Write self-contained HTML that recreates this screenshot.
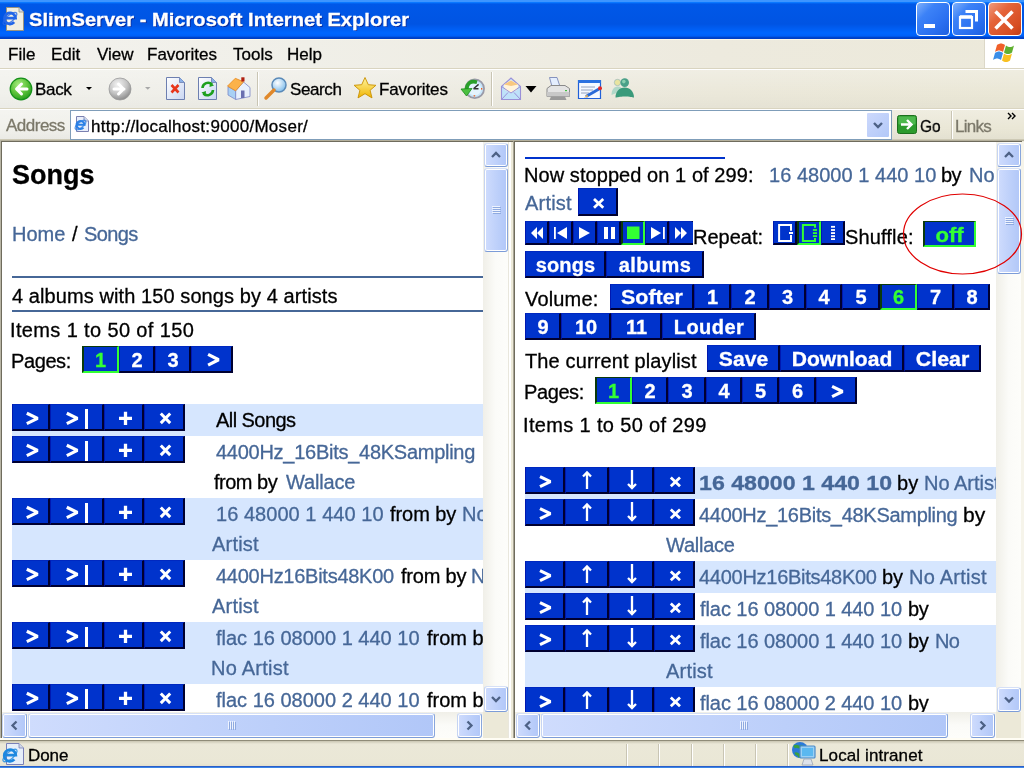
<!DOCTYPE html>
<html><head><meta charset="utf-8"><title>SlimServer - Microsoft Internet Explorer</title>
<style>
html,body{margin:0;padding:0;width:1024px;height:768px;overflow:hidden;background:#ece9d8;}
body{position:relative;font-family:"Liberation Sans", sans-serif;}
.a{position:absolute;}
.t{position:absolute;white-space:pre;will-change:transform;-webkit-text-stroke:0.3px currentColor;}
</style></head><body>
<div class="a" style="left:0px;top:0px;width:1024px;height:39px;background:linear-gradient(#3d95ff 0px,#3d95ff 1.5px,#0a78ff 2.5px,#0058e8 4px,#0054e3 24px,#005cf0 28px,#0066ff 33px,#0060f8 36px,#0044cc 37.5px,#003cc0 39px);"></div>
<div class="t" id="t0" style="left:28.64px;top:10px;font-size:19px;line-height:19px;font-weight:700;color:#fff;transform:scaleX(1.0587);transform-origin:0 50%;text-shadow:1px 1px 0 #0a2a9a;">SlimServer - Microsoft Internet Explorer</div>
<svg class="a" style="left:0;top:0;overflow:visible" width="1" height="1"><path d="M6.5 7.5H19L23.5 12V30.5H6.5z" fill="#f0eee2" stroke="#9a9480" stroke-width="1"/><path d="M19 7.5V12H23.5" fill="#cfd8ea" stroke="#9a9480" stroke-width="0.8"/><path d="M4.4 18.2H15.600000000000001A5.6 5.6 0 1 0 14.2 22.195999999999998" stroke="#2266e8" stroke-width="2.72" fill="none"/><ellipse cx="10" cy="18.5" rx="8.50" ry="3.40" transform="rotate(-40 10 18.5)" fill="none" stroke="#2266e8" stroke-width="1.3" opacity="0.8"/></svg>
<div class="a" style="left:916px;top:2px;width:34px;height:34px;background:linear-gradient(135deg,#7fb0fb 0%,#3c82f7 30%,#2a6ff0 70%,#1d5fe0 100%);border:1px solid #fff;border-radius:4px;box-sizing:border-box;"></div>
<div class="a" style="left:952px;top:2px;width:34px;height:34px;background:linear-gradient(135deg,#7fb0fb 0%,#3c82f7 30%,#2a6ff0 70%,#1d5fe0 100%);border:1px solid #fff;border-radius:4px;box-sizing:border-box;"></div>
<div class="a" style="left:988px;top:2px;width:34px;height:34px;background:linear-gradient(135deg,#f09a7c 0%,#e5643a 35%,#d64d22 80%,#c13d17 100%);border:1px solid #fff;border-radius:4px;box-sizing:border-box;"></div>
<div class="a" style="left:924px;top:24px;width:11px;height:4px;background:#fff;"></div>
<svg class="a" style="left:952px;top:2px" width="34" height="34" viewBox="0 0 34 34">
<path d="M13.5 9.5h11v10" fill="none" stroke="#fff" stroke-width="3"/>
<rect x="8" y="15" width="12" height="11" fill="none" stroke="#fff" stroke-width="2.2"/>
<path d="M8 15h12" stroke="#fff" stroke-width="3.5"/>
</svg>
<svg class="a" style="left:988px;top:2px" width="34" height="34" viewBox="0 0 34 34">
<path d="M7.5 9.5l17 17M24.5 9.5l-17 17" stroke="#fff" stroke-width="3.5"/>
</svg>
<div class="a" style="left:0px;top:39px;width:1024px;height:29px;background:linear-gradient(90deg,#f3f2ee 0%,#f0efe8 30%,#edeade 70%,#ece9da 100%);"></div>
<div class="a" style="left:0px;top:39px;width:1024px;height:1px;background:#fff8e8;"></div>
<div class="a" style="left:984px;top:39px;width:40px;height:29px;background:#fff;border-left:1px solid #dcd8c8;box-sizing:border-box;"></div>
<svg class="a" style="left:993px;top:40px" width="26" height="24" viewBox="0 0 26 24" style="transform:scale(1.1)">
<path d="M4 5c3-2 5-2 8 0l-2 7c-3-2-5-2-8 0z" fill="#f0602a"/>
<path d="M13 5.5c3 2 5 2 8 0l-2 7c-3 2-5 2-8 0z" fill="#60b030"/>
<path d="M2 13c3-2 5-2 8 0l-2 7c-3-2-5-2-8 0z" fill="#3a8ee8"/>
<path d="M11 13.5c3 2 5 2 8 0l-2 7c-3 2-5 2-8 0z" fill="#f8c020"/>
</svg>
<div class="t" id="t1" style="left:8.30px;top:46px;font-size:17px;line-height:17px;">File</div>
<div class="t" id="t2" style="left:50.50px;top:46px;font-size:17px;line-height:17px;">Edit</div>
<div class="t" id="t3" style="left:97.00px;top:46px;font-size:17px;line-height:17px;">View</div>
<div class="t" id="t4" style="left:146.70px;top:46px;font-size:17px;line-height:17px;">Favorites</div>
<div class="t" id="t5" style="left:233.40px;top:46px;font-size:17px;line-height:17px;">Tools</div>
<div class="t" id="t6" style="left:287.20px;top:46px;font-size:17px;line-height:17px;">Help</div>
<div class="a" style="left:0px;top:68px;width:1024px;height:1px;background:#d9d4c0;"></div>
<div class="a" style="left:0px;top:69px;width:1024px;height:1px;background:#fff;"></div>
<div class="a" style="left:0px;top:70px;width:1024px;height:38px;background:linear-gradient(rgba(255,255,255,0.25),rgba(255,255,255,0) 60%,rgba(0,0,0,0.025)),linear-gradient(90deg,#f1f1ec 0%,#eeede6 30%,#ebe8da 70%,#eae7d6 100%);"></div>
<div class="a" style="left:0px;top:108px;width:1024px;height:1px;background:#d9d4c0;"></div>
<div class="a" style="left:0px;top:109px;width:1024px;height:1px;background:#fff;"></div>
<svg class="a" style="left:0px;top:70px" width="640" height="38" viewBox="0 70 640 38">
<defs>
<radialGradient id="gG" cx="0.4" cy="0.3" r="0.7"><stop offset="0" stop-color="#a8ec80"/><stop offset="0.6" stop-color="#5cc23a"/><stop offset="1" stop-color="#2aa020"/></radialGradient>
<radialGradient id="gY" cx="0.4" cy="0.3" r="0.7"><stop offset="0" stop-color="#f4f4f4"/><stop offset="0.6" stop-color="#c4c4c4"/><stop offset="1" stop-color="#8e8e8e"/></radialGradient>
<linearGradient id="pg" x1="0" y1="0" x2="1" y2="1"><stop offset="0" stop-color="#ffffff"/><stop offset="1" stop-color="#c9d6f2"/></linearGradient>
<radialGradient id="mg" cx="0.4" cy="0.35" r="0.6"><stop offset="0" stop-color="#ffffff"/><stop offset="1" stop-color="#8cc4ee"/></radialGradient>
<linearGradient id="sg" x1="0" y1="0" x2="0" y2="1"><stop offset="0" stop-color="#fff6a0"/><stop offset="1" stop-color="#f0b400"/></linearGradient>
</defs>
<circle cx="21" cy="89" r="10.8" fill="url(#gG)" stroke="#15901a" stroke-width="1.2"/>
<path d="M27 89h-10M21.5 84l-5 5 5 5" stroke="#fff" stroke-width="3" fill="none" stroke-linecap="round" stroke-linejoin="round"/>
<path d="M86 87h6l-3 3z" fill="#000"/>
<circle cx="120" cy="89" r="11" fill="url(#gY)" stroke="#9a9a9a" stroke-width="0.8"/>
<path d="M114 89h10M118.5 84l5 5-5 5" stroke="#fff" stroke-width="3" fill="none" stroke-linecap="round" stroke-linejoin="round"/>
<path d="M145 87h5.5l-2.75 2.7z" fill="#a8a8a8"/>
<path d="M166.5 77.5h13l5 5v17h-18z" fill="url(#pg)" stroke="#6d7fb0" stroke-width="1"/>
<path d="M179.5 77.5v5h5" fill="#8ab0e8" stroke="#6d7fb0" stroke-width="0.8"/>
<path d="M171.5 85l7 7.5M178.5 85l-7 7.5" stroke="#e8361c" stroke-width="2.6"/>
<path d="M198.5 77.5h13l5 5v17h-18z" fill="url(#pg)" stroke="#6d7fb0" stroke-width="1"/>
<path d="M211.5 77.5v5h5" fill="#8ab0e8" stroke="#6d7fb0" stroke-width="0.8"/>
<path d="M202.5 88a5.5 5.5 0 0 1 9.5-3.5" stroke="#1ea01e" stroke-width="2.6" fill="none"/>
<path d="M210 82l4 3.5-4.5 1.5z" fill="#1ea01e"/>
<path d="M213 90a5.5 5.5 0 0 1-9.5 3.5" stroke="#1ea01e" stroke-width="2.6" fill="none"/>
<path d="M205.5 96l-4-3.5 4.5-1.5z" fill="#1ea01e"/>
<path d="M228 86.5L235.7 91V99.5L228 95z" fill="#a8d0f4" stroke="#7a86c8" stroke-width="0.8"/>
<path d="M235.7 90.8L243.5 82L250 87.5V96.5L235.7 99.5z" fill="#e8f0fc" stroke="#7a86c8" stroke-width="0.8"/>
<path d="M241 90.5h3.5v7.5h-3.5z" fill="#6a70b0"/>
<path d="M227.5 86.1L235.3 78.3L243.5 81.8L235.7 90.8z" fill="#fbb24a" stroke="#e88a20" stroke-width="0.8"/>
<rect x="241.3" y="77.3" width="3.2" height="4.2" fill="#b02010"/>
<path d="M257.5 72v34" stroke="#c9c5b4" stroke-width="1"/>
<path d="M258.5 72v34" stroke="#fff" stroke-width="1"/>
<circle cx="279" cy="85" r="7" fill="url(#mg)" stroke="#5a8ab8" stroke-width="1.5"/>
<path d="M274 90l-8 8" stroke="#e0882a" stroke-width="3.5" stroke-linecap="round"/>
<path d="M365 77.5l3.3 7.2 7.6.6-5.8 5 1.9 7.6-7-4.2-7 4.2 1.9-7.6-5.8-5 7.6-.6z" fill="url(#sg)" stroke="#c89000" stroke-width="0.9"/>
<circle cx="474.75" cy="88.8" r="9.3" fill="#c8e6fa" stroke="#9a9aa8" stroke-width="1.8"/>
<circle cx="474.75" cy="88.8" r="6.5" fill="#e4f4fe"/>
<path d="M473.5 88.8L478.6 84.4M473.5 88.8H478.5" stroke="#333" stroke-width="1.4" fill="none"/>
<rect x="481" y="88" width="1.3" height="1.6" fill="#f06020"/><rect x="473.6" y="95.2" width="1.6" height="1.3" fill="#f06020"/>
<path d="M477 82.2C471 80.5 467 83 466.5 89.5" stroke="#2aa02a" stroke-width="3.6" fill="none"/>
<path d="M461 89L472 88.5L466.5 96z" fill="#4cc040" stroke="#1a8a1a" stroke-width="0.8"/>
<path d="M491.5 72v34" stroke="#c9c5b4" stroke-width="1"/>
<path d="M492.5 72v34" stroke="#fff" stroke-width="1"/>
<path d="M501.5 86.5L511 78L520.5 86.5V99.5H501.5z" fill="#bfe2fa" stroke="#9a90d8" stroke-width="1.1"/>
<path d="M503.5 85L511 80L518.5 85L517 90L511 93L505 90z" fill="#fff4dc"/>
<path d="M504 84.5L511 80.5L518 84.5L511 86z" fill="#f8c880"/>
<path d="M501.5 86.5L511 93L520.5 86.5M501.5 99.5L508 92.5M520.5 99.5L514 92.5" stroke="#9a90d8" stroke-width="1" fill="none"/>
<path d="M525.5 86h11l-5.5 6.5z" fill="#000"/>
<path d="M549.5 77.5h7.5l3 9h-8z" fill="#e4eefe" stroke="#7a88b8" stroke-width="0.9"/>
<path d="M547 88.5l4-3h14l4.5 3v8h-22.5z" fill="#e4e4e4" stroke="#8a8a8a" stroke-width="1"/>
<path d="M547 92h22.5v4.5h-22.5z" fill="#c8c8c8"/>
<path d="M551 96.5h14l1.5 3.5h-17z" fill="#9a9a9a"/>
<rect x="565" y="90" width="2" height="1.2" fill="#40c040"/>
<path d="M578.5 80.5h22v18h-22z" fill="#f4f8ff" stroke="#2060d8" stroke-width="1.2"/>
<path d="M578 80h23v3h-23z" fill="#2a70e0"/>
<path d="M581 87h14M581 90h12M581 93h8" stroke="#8a9ab8" stroke-width="0.9"/>
<path d="M586 96.5l13-7.5" stroke="#2a6ad8" stroke-width="3"/>
<path d="M584 98l3-3.5 1.5 2z" fill="#e0b060"/>
<circle cx="600" cy="88.3" r="2" fill="#e02828"/>
<circle cx="617.5" cy="82.5" r="3.2" fill="#e8e4a0" stroke="#8ab0c0" stroke-width="0.6"/>
<path d="M611.5 95c0-5 2.5-8.5 6-8.5s5 2 5.5 4z" fill="#b0d8c8"/>
<circle cx="624.7" cy="82.6" r="4.3" fill="#4aa088"/>
<circle cx="623.8" cy="81.6" r="1.8" fill="#8ad0b0"/>
<path d="M615.5 97.5c0-6 4-10 9.2-10s9.3 4 9.3 10c-2 0-4-1-9.3-1s-7 1-9.2 1z" fill="#3a9a7a"/>
</svg>
<div class="t" id="t7" style="left:35.00px;top:81px;font-size:17px;line-height:17px;letter-spacing:-0.333px;">Back</div>
<div class="t" id="t8" style="left:290.20px;top:81px;font-size:17px;line-height:17px;letter-spacing:-0.400px;">Search</div>
<div class="t" id="t9" style="left:379.00px;top:81px;font-size:17px;line-height:17px;letter-spacing:-0.125px;">Favorites</div>
<div class="a" style="left:0px;top:110px;width:1024px;height:30px;background:linear-gradient(rgba(255,255,255,0.25),rgba(255,255,255,0) 60%,rgba(0,0,0,0.03)),linear-gradient(90deg,#f1f1ec 0%,#eeede6 30%,#ebe8da 70%,#eae7d6 100%);"></div>
<div class="t" id="t10" style="left:6.00px;top:117px;font-size:17px;line-height:17px;color:#7b786a;letter-spacing:-0.500px;">Address</div>
<div class="a" style="left:70px;top:110px;width:822px;height:30px;background:#fff;border:1px solid #7f9db9;box-sizing:border-box;"></div>
<svg class="a" style="left:0;top:0;overflow:visible" width="1" height="1"><path d="M76.5 116.5H84L88.5 121V131.5H76.5z" fill="#e8eefa" stroke="#7a80b0" stroke-width="1"/><path d="M84 116.5V121H88.5" fill="#cfd8ea" stroke="#7a80b0" stroke-width="0.8"/><path d="M76.5 124.7H84.5A4.0 4.0 0 1 0 83.5 127.64" stroke="#2a80e6" stroke-width="2.08" fill="none"/><ellipse cx="80.5" cy="125" rx="6.50" ry="2.60" transform="rotate(-40 80.5 125)" fill="none" stroke="#2a80e6" stroke-width="1.3" opacity="0.8"/></svg>
<div class="t" id="t11" style="left:91.20px;top:118px;font-size:17px;line-height:17px;letter-spacing:0.296px;">http://localhost:9000/Moser/</div>
<div class="a" style="left:866px;top:112px;width:24px;height:26px;background:linear-gradient(135deg,#cdd9fc,#b2c8f8);border:1px solid #fff;border-radius:2px;box-sizing:border-box;"></div>
<svg class="a" style="left:866px;top:112px" width="24" height="26" viewBox="0 0 24 26">
<path d="M8 11l4 4 4-4" stroke="#4d6185" stroke-width="2.4" fill="none"/>
</svg>
<svg class="a" style="left:897px;top:115px" width="20" height="19" viewBox="0 0 20 19">
<rect x="0.5" y="0.5" width="19" height="18" rx="2" fill="#2c9a2c" stroke="#1c701c"/>
<rect x="1.5" y="1.5" width="17" height="8" rx="1" fill="#4cb84c"/>
<path d="M4 9.5h10M10 5l4.5 4.5L10 14" stroke="#fff" stroke-width="2.4" fill="none"/>
</svg>
<div class="t" id="t12" style="left:920.00px;top:118px;font-size:17px;line-height:17px;transform:scaleX(0.9048);transform-origin:0 50%;">Go</div>
<div class="a" style="left:951px;top:111px;width:1px;height:28px;background:#c9c5b4;"></div>
<div class="a" style="left:952px;top:111px;width:1px;height:28px;background:#fff;"></div>
<div class="t" id="t13" style="left:955.40px;top:118px;font-size:17px;line-height:17px;color:#7b786a;letter-spacing:-0.750px;">Links</div>
<svg class="a" style="left:1006px;top:111px" width="12" height="10" viewBox="0 0 12 10">
<path d="M2 2l3 3-3 3M6 2l3 3-3 3" stroke="#000" stroke-width="1.4" fill="none"/>
</svg>
<div class="a" style="left:0px;top:139px;width:70px;height:1px;background:#cdc9b5;"></div>
<div class="a" style="left:892px;top:139px;width:132px;height:1px;background:#cdc9b5;"></div>
<div class="a" style="left:0px;top:140px;width:1024px;height:598px;background:#ece9d8;"></div>
<div class="a" style="left:0px;top:140px;width:513px;height:1px;background:#b5b09c;"></div>
<div class="a" style="left:0px;top:141px;width:513px;height:1px;background:#6f6c5d;"></div>
<div class="a" style="left:0px;top:140px;width:1px;height:598px;background:#b8b5a5;"></div>
<div class="a" style="left:1px;top:141px;width:1px;height:597px;background:#6f6c5d;"></div>
<div class="a" style="left:513px;top:140px;width:511px;height:1px;background:#b5b09c;"></div>
<div class="a" style="left:514px;top:141px;width:508px;height:1px;background:#6f6c5d;"></div>
<div class="a" style="left:513px;top:141px;width:1px;height:597px;background:#a8a494;"></div>
<div class="a" style="left:514px;top:141px;width:1px;height:597px;background:#6f6c5d;"></div>
<div class="a" style="left:2px;top:142px;width:507px;height:570px;background:#fff;"></div>
<div class="a" style="left:515px;top:142px;width:506px;height:570px;background:#fff;"></div>
<div class="a" style="left:483px;top:142px;width:25px;height:570px;background:linear-gradient(90deg,#f0efe8,#fbfbf8 50%,#fdfdfa);"></div>
<div class="a" style="left:484px;top:143px;width:24px;height:24px;border:1px solid;border-color:#d6e0f6 #88a6dc #7c9cd8 #c6d4f2;border-radius:3px;box-shadow:inset 0 0 0 1px #fff;background:linear-gradient(90deg,#cfdcfd,#bccffa 60%,#b1c7f8);box-sizing:border-box;"></div>
<svg class="a" style="left:0;top:0;overflow:visible" width="1" height="1"><path d="M492.0 157.0l4-4 4 4" stroke="#4d6185" stroke-width="2.3" fill="none"/></svg>
<div class="a" style="left:484px;top:168px;width:24px;height:84px;border:1px solid;border-color:#d6e0f6 #88a6dc #7c9cd8 #c6d4f2;border-radius:3px;box-shadow:inset 0 0 0 1px #fff;background:linear-gradient(90deg,#cfdcfd,#bccffa 60%,#b1c7f8);box-sizing:border-box;"></div>
<div class="a" style="left:492px;top:206px;width:8px;height:1px;background:#eef3fe;"></div>
<div class="a" style="left:493px;top:207px;width:8px;height:1px;background:#8faae0;"></div>
<div class="a" style="left:492px;top:208px;width:8px;height:1px;background:#eef3fe;"></div>
<div class="a" style="left:493px;top:209px;width:8px;height:1px;background:#8faae0;"></div>
<div class="a" style="left:492px;top:210px;width:8px;height:1px;background:#eef3fe;"></div>
<div class="a" style="left:493px;top:211px;width:8px;height:1px;background:#8faae0;"></div>
<div class="a" style="left:492px;top:212px;width:8px;height:1px;background:#eef3fe;"></div>
<div class="a" style="left:493px;top:213px;width:8px;height:1px;background:#8faae0;"></div>
<div class="a" style="left:484px;top:686px;width:24px;height:26px;border:1px solid;border-color:#d6e0f6 #88a6dc #7c9cd8 #c6d4f2;border-radius:3px;box-shadow:inset 0 0 0 1px #fff;background:linear-gradient(90deg,#cfdcfd,#bccffa 60%,#b1c7f8);box-sizing:border-box;"></div>
<svg class="a" style="left:0;top:0;overflow:visible" width="1" height="1"><path d="M492.0 697.0l4 4 4-4" stroke="#4d6185" stroke-width="2.3" fill="none"/></svg>
<div class="a" style="left:2px;top:712px;width:481px;height:26px;background:linear-gradient(#f0efe8,#fbfbf8 50%,#fdfdfa);"></div>
<div class="a" style="left:2px;top:713px;width:25px;height:25px;border:1px solid;border-color:#d6e0f6 #88a6dc #7c9cd8 #c6d4f2;border-radius:3px;box-shadow:inset 0 0 0 1px #fff;background:linear-gradient(90deg,#cfdcfd,#bccffa 60%,#b1c7f8);box-sizing:border-box;"></div>
<svg class="a" style="left:0;top:0;overflow:visible" width="1" height="1"><path d="M16.5 721.5l-4 4 4 4" stroke="#4d6185" stroke-width="2.3" fill="none"/></svg>
<div class="a" style="left:28px;top:713px;width:407px;height:25px;border:1px solid;border-color:#d6e0f6 #88a6dc #7c9cd8 #c6d4f2;border-radius:3px;box-shadow:inset 0 0 0 1px #fff;background:linear-gradient(90deg,#cfdcfd,#bccffa 60%,#b1c7f8);box-sizing:border-box;"></div>
<div class="a" style="left:228px;top:721px;width:1px;height:8px;background:#eef3fe;"></div>
<div class="a" style="left:229px;top:722px;width:1px;height:8px;background:#8faae0;"></div>
<div class="a" style="left:230px;top:721px;width:1px;height:8px;background:#eef3fe;"></div>
<div class="a" style="left:231px;top:722px;width:1px;height:8px;background:#8faae0;"></div>
<div class="a" style="left:232px;top:721px;width:1px;height:8px;background:#eef3fe;"></div>
<div class="a" style="left:233px;top:722px;width:1px;height:8px;background:#8faae0;"></div>
<div class="a" style="left:234px;top:721px;width:1px;height:8px;background:#eef3fe;"></div>
<div class="a" style="left:235px;top:722px;width:1px;height:8px;background:#8faae0;"></div>
<div class="a" style="left:457px;top:713px;width:25px;height:25px;border:1px solid;border-color:#d6e0f6 #88a6dc #7c9cd8 #c6d4f2;border-radius:3px;box-shadow:inset 0 0 0 1px #fff;background:linear-gradient(90deg,#cfdcfd,#bccffa 60%,#b1c7f8);box-sizing:border-box;"></div>
<svg class="a" style="left:0;top:0;overflow:visible" width="1" height="1"><path d="M467.5 721.5l4 4-4 4" stroke="#4d6185" stroke-width="2.3" fill="none"/></svg>
<div class="a" style="left:508px;top:142px;width:1px;height:596px;background:#e9e7dd;"></div>
<div class="a" style="left:509px;top:142px;width:2px;height:596px;background:#fff;"></div>
<div class="a" style="left:996px;top:142px;width:25px;height:570px;background:linear-gradient(90deg,#f0efe8,#fbfbf8 50%,#fdfdfa);"></div>
<div class="a" style="left:997px;top:143px;width:24px;height:24px;border:1px solid;border-color:#d6e0f6 #88a6dc #7c9cd8 #c6d4f2;border-radius:3px;box-shadow:inset 0 0 0 1px #fff;background:linear-gradient(90deg,#cfdcfd,#bccffa 60%,#b1c7f8);box-sizing:border-box;"></div>
<svg class="a" style="left:0;top:0;overflow:visible" width="1" height="1"><path d="M1005.0 157.0l4-4 4 4" stroke="#4d6185" stroke-width="2.3" fill="none"/></svg>
<div class="a" style="left:997px;top:168px;width:24px;height:106px;border:1px solid;border-color:#d6e0f6 #88a6dc #7c9cd8 #c6d4f2;border-radius:3px;box-shadow:inset 0 0 0 1px #fff;background:linear-gradient(90deg,#cfdcfd,#bccffa 60%,#b1c7f8);box-sizing:border-box;"></div>
<div class="a" style="left:1005px;top:217px;width:8px;height:1px;background:#eef3fe;"></div>
<div class="a" style="left:1006px;top:218px;width:8px;height:1px;background:#8faae0;"></div>
<div class="a" style="left:1005px;top:219px;width:8px;height:1px;background:#eef3fe;"></div>
<div class="a" style="left:1006px;top:220px;width:8px;height:1px;background:#8faae0;"></div>
<div class="a" style="left:1005px;top:221px;width:8px;height:1px;background:#eef3fe;"></div>
<div class="a" style="left:1006px;top:222px;width:8px;height:1px;background:#8faae0;"></div>
<div class="a" style="left:1005px;top:223px;width:8px;height:1px;background:#eef3fe;"></div>
<div class="a" style="left:1006px;top:224px;width:8px;height:1px;background:#8faae0;"></div>
<div class="a" style="left:997px;top:687px;width:24px;height:25px;border:1px solid;border-color:#d6e0f6 #88a6dc #7c9cd8 #c6d4f2;border-radius:3px;box-shadow:inset 0 0 0 1px #fff;background:linear-gradient(90deg,#cfdcfd,#bccffa 60%,#b1c7f8);box-sizing:border-box;"></div>
<svg class="a" style="left:0;top:0;overflow:visible" width="1" height="1"><path d="M1005.0 697.5l4 4 4-4" stroke="#4d6185" stroke-width="2.3" fill="none"/></svg>
<div class="a" style="left:515px;top:712px;width:481px;height:26px;background:linear-gradient(#f0efe8,#fbfbf8 50%,#fdfdfa);"></div>
<div class="a" style="left:516px;top:713px;width:24px;height:25px;border:1px solid;border-color:#d6e0f6 #88a6dc #7c9cd8 #c6d4f2;border-radius:3px;box-shadow:inset 0 0 0 1px #fff;background:linear-gradient(90deg,#cfdcfd,#bccffa 60%,#b1c7f8);box-sizing:border-box;"></div>
<svg class="a" style="left:0;top:0;overflow:visible" width="1" height="1"><path d="M530.0 721.5l-4 4 4 4" stroke="#4d6185" stroke-width="2.3" fill="none"/></svg>
<div class="a" style="left:541px;top:713px;width:407px;height:25px;border:1px solid;border-color:#d6e0f6 #88a6dc #7c9cd8 #c6d4f2;border-radius:3px;box-shadow:inset 0 0 0 1px #fff;background:linear-gradient(90deg,#cfdcfd,#bccffa 60%,#b1c7f8);box-sizing:border-box;"></div>
<div class="a" style="left:740px;top:721px;width:1px;height:8px;background:#eef3fe;"></div>
<div class="a" style="left:741px;top:722px;width:1px;height:8px;background:#8faae0;"></div>
<div class="a" style="left:742px;top:721px;width:1px;height:8px;background:#eef3fe;"></div>
<div class="a" style="left:743px;top:722px;width:1px;height:8px;background:#8faae0;"></div>
<div class="a" style="left:744px;top:721px;width:1px;height:8px;background:#eef3fe;"></div>
<div class="a" style="left:745px;top:722px;width:1px;height:8px;background:#8faae0;"></div>
<div class="a" style="left:746px;top:721px;width:1px;height:8px;background:#eef3fe;"></div>
<div class="a" style="left:747px;top:722px;width:1px;height:8px;background:#8faae0;"></div>
<div class="a" style="left:970px;top:713px;width:25px;height:25px;border:1px solid;border-color:#d6e0f6 #88a6dc #7c9cd8 #c6d4f2;border-radius:3px;box-shadow:inset 0 0 0 1px #fff;background:linear-gradient(90deg,#cfdcfd,#bccffa 60%,#b1c7f8);box-sizing:border-box;"></div>
<svg class="a" style="left:0;top:0;overflow:visible" width="1" height="1"><path d="M980.5 721.5l4 4-4 4" stroke="#4d6185" stroke-width="2.3" fill="none"/></svg>
<div class="a" style="left:1021px;top:142px;width:3px;height:596px;background:#f6f4ea;"></div>
<div class="a" style="left:0px;top:738px;width:1024px;height:2px;background:#fffdf4;"></div>
<div class="a" style="left:0px;top:740px;width:1024px;height:1px;background:#8f8b78;"></div>
<div class="a" style="left:0px;top:741px;width:1024px;height:25px;background:linear-gradient(#c9c5b2 0px,#ebe8d8 3px,#eae7d6 22px,#e4e0cc 25px);"></div>
<div class="a" style="left:0px;top:766px;width:1024px;height:1px;background:#2a5ec8;"></div>
<div class="a" style="left:0px;top:767px;width:1024px;height:1px;background:#3d86e6;"></div>
<svg class="a" style="left:0;top:0;overflow:visible" width="1" height="1"><path d="M6.5 743.5H19L23.5 748V764.5H6.5z" fill="#e6eefa" stroke="#7a80b8" stroke-width="1"/><path d="M19 743.5V748H23.5" fill="#cfd8ea" stroke="#7a80b8" stroke-width="0.8"/><path d="M4.2 755.2H15.8A5.8 5.8 0 1 0 14.35 759.328" stroke="#1e88e0" stroke-width="2.80" fill="none"/><ellipse cx="10" cy="755.5" rx="8.75" ry="3.50" transform="rotate(-40 10 755.5)" fill="none" stroke="#1e88e0" stroke-width="1.3" opacity="0.8"/></svg>
<div class="t" id="t14" style="left:28.30px;top:747px;font-size:17px;line-height:17px;letter-spacing:-0.100px;">Done</div>
<div class="a" style="left:626px;top:744px;width:1px;height:22px;background:#c9c5b4;"></div>
<div class="a" style="left:627px;top:744px;width:1px;height:22px;background:#fff;"></div>
<div class="a" style="left:658px;top:744px;width:1px;height:22px;background:#c9c5b4;"></div>
<div class="a" style="left:659px;top:744px;width:1px;height:22px;background:#fff;"></div>
<div class="a" style="left:691px;top:744px;width:1px;height:22px;background:#c9c5b4;"></div>
<div class="a" style="left:692px;top:744px;width:1px;height:22px;background:#fff;"></div>
<div class="a" style="left:723px;top:744px;width:1px;height:22px;background:#c9c5b4;"></div>
<div class="a" style="left:724px;top:744px;width:1px;height:22px;background:#fff;"></div>
<div class="a" style="left:755px;top:744px;width:1px;height:22px;background:#c9c5b4;"></div>
<div class="a" style="left:756px;top:744px;width:1px;height:22px;background:#fff;"></div>
<div class="a" style="left:787px;top:744px;width:1px;height:22px;background:#c9c5b4;"></div>
<div class="a" style="left:788px;top:744px;width:1px;height:22px;background:#fff;"></div>
<svg class="a" style="left:791px;top:741px" width="26" height="26" viewBox="0 0 26 26">
<circle cx="9" cy="9" r="8" fill="#2a7ad8"/>
<path d="M3 6c3-2 5 1 7 0s2 4 5 3M4 13c2-1 4 1 5 3" stroke="#3aa040" stroke-width="3" fill="none"/>
<rect x="9" y="5" width="15" height="12" rx="1" fill="#9ad0f4" stroke="#4a8ac8" stroke-width="1.2"/>
<rect x="11" y="7" width="11" height="8" fill="#5ab8f0"/>
<path d="M13 18h7l2 6h-11z" fill="#dde2ea" stroke="#9aa4b4" stroke-width="0.8"/>
</svg>
<div class="t" id="t15" style="left:818.60px;top:747px;font-size:17px;line-height:17px;letter-spacing:0.108px;">Local intranet</div>
<div class="a" style="left:2px;top:142px;width:481px;height:570px;overflow:hidden;">
<div class="t" id="t16" style="left:9.90px;top:20px;font-size:27px;line-height:27px;font-weight:700;">Songs</div>
<div class="t" id="t17" style="left:9.90px;top:82px;font-size:20px;line-height:20px;color:#466797;">Home</div>
<div class="t" id="t18" style="left:70.00px;top:82px;font-size:20px;line-height:20px;">/</div>
<div class="t" id="t19" style="left:81.50px;top:82px;font-size:20px;line-height:20px;color:#466797;letter-spacing:-0.625px;">Songs</div>
<div class="a" style="left:10px;top:134px;width:471px;height:2px;background:#466797;"></div>
<div class="t" id="t20" style="left:10.00px;top:144px;font-size:20px;line-height:20px;letter-spacing:0.086px;">4 albums with 150 songs by 4 artists</div>
<div class="a" style="left:10px;top:168px;width:471px;height:2px;background:#466797;"></div>
<div class="t" id="t21" style="left:8.00px;top:178px;font-size:20px;line-height:20px;letter-spacing:0.368px;">Items 1 to 50 of 150</div>
<div class="t" id="t22" style="left:9.00px;top:209px;font-size:20px;line-height:20px;letter-spacing:-0.400px;">Pages:</div>
<div class="a" style="left:80px;top:204px;width:37px;height:27px;background:#0033cc;border-style:solid;border-width:1px 2px 2px 2px;border-color:#0a3a0a #33ff33 #33ff33 #0a3a0a;box-sizing:border-box;"></div>
<div class="t" id="t23" style="left:80.00px;top:208px;font-size:20px;line-height:20px;font-weight:700;color:#33ff33;width:37px;text-align:center;">1</div>
<div class="a" style="left:117px;top:204px;width:36px;height:27px;background:#0033cc;border-style:solid;border-width:1px 2px 2px 1px;border-color:#0028c0 #000030 #000030 #0018b0;box-sizing:border-box;"></div>
<div class="t" id="t24" style="left:117.00px;top:208px;font-size:20px;line-height:20px;font-weight:700;color:#fff;width:36px;text-align:center;">2</div>
<div class="a" style="left:153px;top:204px;width:36px;height:27px;background:#0033cc;border-style:solid;border-width:1px 2px 2px 1px;border-color:#0028c0 #000030 #000030 #0018b0;box-sizing:border-box;"></div>
<div class="t" id="t25" style="left:153.00px;top:208px;font-size:20px;line-height:20px;font-weight:700;color:#fff;width:36px;text-align:center;">3</div>
<div class="a" style="left:189px;top:204px;width:42px;height:27px;background:#0033cc;border-style:solid;border-width:1px 2px 2px 1px;border-color:#0028c0 #000030 #000030 #0018b0;box-sizing:border-box;"></div>
<svg class="a" style="left:-2px;top:-142px;overflow:visible" width="1" height="1"><path d="M208.1 354.4L218.6 359.75L208.1 365.1" stroke="#fff" stroke-width="3.2" fill="none" stroke-linejoin="miter" stroke-miterlimit="2"/></svg>
<div class="a" style="left:10px;top:262px;width:471px;height:32px;background:#d6e6fe;"></div>
<div class="a" style="left:10px;top:262px;width:38px;height:27px;background:#0033cc;border-style:solid;border-width:1px 2px 2px 1px;border-color:#0028c0 #000030 #000030 #0018b0;box-sizing:border-box;"></div>
<div class="a" style="left:48px;top:262px;width:54px;height:27px;background:#0033cc;border-style:solid;border-width:1px 2px 2px 1px;border-color:#0028c0 #000030 #000030 #0018b0;box-sizing:border-box;"></div>
<div class="a" style="left:102px;top:262px;width:40px;height:27px;background:#0033cc;border-style:solid;border-width:1px 2px 2px 1px;border-color:#0028c0 #000030 #000030 #0018b0;box-sizing:border-box;"></div>
<div class="a" style="left:142px;top:262px;width:41px;height:27px;background:#0033cc;border-style:solid;border-width:1px 2px 2px 1px;border-color:#0028c0 #000030 #000030 #0018b0;box-sizing:border-box;"></div>
<svg class="a" style="left:-2px;top:-142px;overflow:visible" width="1" height="1"><path d="M26.8 413.2L37.6 418.4L26.8 423.6" stroke="#fff" stroke-width="3.2" fill="none" stroke-linejoin="miter" stroke-miterlimit="2"/></svg>
<svg class="a" style="left:-2px;top:-142px;overflow:visible" width="1" height="1"><path d="M66.8 413.2L77.4 418.4L66.8 423.6" stroke="#fff" stroke-width="3.2" fill="none" stroke-linejoin="miter" stroke-miterlimit="2"/></svg>
<div class="a" style="left:83px;top:267px;width:3px;height:20px;background:#fff;"></div>
<svg class="a" style="left:-2px;top:-142px;overflow:visible" width="1" height="1"><path d="M119 418.4H132M125.5 411.8V425" stroke="#fff" stroke-width="3.3" fill="none" stroke-linejoin="miter" stroke-miterlimit="2"/></svg>
<svg class="a" style="left:-2px;top:-142px;overflow:visible" width="1" height="1"><path d="M160.8 413.5L170.2 423.1M170.2 413.5L160.8 423.1" stroke="#fff" stroke-width="3" fill="none" stroke-linejoin="miter" stroke-miterlimit="2"/></svg>
<div class="a" style="left:10px;top:294px;width:471px;height:62px;background:#fff;"></div>
<div class="a" style="left:10px;top:294px;width:38px;height:27px;background:#0033cc;border-style:solid;border-width:1px 2px 2px 1px;border-color:#0028c0 #000030 #000030 #0018b0;box-sizing:border-box;"></div>
<div class="a" style="left:48px;top:294px;width:54px;height:27px;background:#0033cc;border-style:solid;border-width:1px 2px 2px 1px;border-color:#0028c0 #000030 #000030 #0018b0;box-sizing:border-box;"></div>
<div class="a" style="left:102px;top:294px;width:40px;height:27px;background:#0033cc;border-style:solid;border-width:1px 2px 2px 1px;border-color:#0028c0 #000030 #000030 #0018b0;box-sizing:border-box;"></div>
<div class="a" style="left:142px;top:294px;width:41px;height:27px;background:#0033cc;border-style:solid;border-width:1px 2px 2px 1px;border-color:#0028c0 #000030 #000030 #0018b0;box-sizing:border-box;"></div>
<svg class="a" style="left:-2px;top:-142px;overflow:visible" width="1" height="1"><path d="M26.8 445.2L37.6 450.4L26.8 455.6" stroke="#fff" stroke-width="3.2" fill="none" stroke-linejoin="miter" stroke-miterlimit="2"/></svg>
<svg class="a" style="left:-2px;top:-142px;overflow:visible" width="1" height="1"><path d="M66.8 445.2L77.4 450.4L66.8 455.6" stroke="#fff" stroke-width="3.2" fill="none" stroke-linejoin="miter" stroke-miterlimit="2"/></svg>
<div class="a" style="left:83px;top:299px;width:3px;height:20px;background:#fff;"></div>
<svg class="a" style="left:-2px;top:-142px;overflow:visible" width="1" height="1"><path d="M119 450.4H132M125.5 443.8V457" stroke="#fff" stroke-width="3.3" fill="none" stroke-linejoin="miter" stroke-miterlimit="2"/></svg>
<svg class="a" style="left:-2px;top:-142px;overflow:visible" width="1" height="1"><path d="M160.8 445.5L170.2 455.1M170.2 445.5L160.8 455.1" stroke="#fff" stroke-width="3" fill="none" stroke-linejoin="miter" stroke-miterlimit="2"/></svg>
<div class="a" style="left:10px;top:356px;width:471px;height:62px;background:#d6e6fe;"></div>
<div class="a" style="left:10px;top:356px;width:38px;height:27px;background:#0033cc;border-style:solid;border-width:1px 2px 2px 1px;border-color:#0028c0 #000030 #000030 #0018b0;box-sizing:border-box;"></div>
<div class="a" style="left:48px;top:356px;width:54px;height:27px;background:#0033cc;border-style:solid;border-width:1px 2px 2px 1px;border-color:#0028c0 #000030 #000030 #0018b0;box-sizing:border-box;"></div>
<div class="a" style="left:102px;top:356px;width:40px;height:27px;background:#0033cc;border-style:solid;border-width:1px 2px 2px 1px;border-color:#0028c0 #000030 #000030 #0018b0;box-sizing:border-box;"></div>
<div class="a" style="left:142px;top:356px;width:41px;height:27px;background:#0033cc;border-style:solid;border-width:1px 2px 2px 1px;border-color:#0028c0 #000030 #000030 #0018b0;box-sizing:border-box;"></div>
<svg class="a" style="left:-2px;top:-142px;overflow:visible" width="1" height="1"><path d="M26.8 507.2L37.6 512.4L26.8 517.6" stroke="#fff" stroke-width="3.2" fill="none" stroke-linejoin="miter" stroke-miterlimit="2"/></svg>
<svg class="a" style="left:-2px;top:-142px;overflow:visible" width="1" height="1"><path d="M66.8 507.2L77.4 512.4L66.8 517.6" stroke="#fff" stroke-width="3.2" fill="none" stroke-linejoin="miter" stroke-miterlimit="2"/></svg>
<div class="a" style="left:83px;top:361px;width:3px;height:20px;background:#fff;"></div>
<svg class="a" style="left:-2px;top:-142px;overflow:visible" width="1" height="1"><path d="M119 512.4H132M125.5 505.8V519" stroke="#fff" stroke-width="3.3" fill="none" stroke-linejoin="miter" stroke-miterlimit="2"/></svg>
<svg class="a" style="left:-2px;top:-142px;overflow:visible" width="1" height="1"><path d="M160.8 507.5L170.2 517.1M170.2 507.5L160.8 517.1" stroke="#fff" stroke-width="3" fill="none" stroke-linejoin="miter" stroke-miterlimit="2"/></svg>
<div class="a" style="left:10px;top:418px;width:471px;height:62px;background:#fff;"></div>
<div class="a" style="left:10px;top:418px;width:38px;height:27px;background:#0033cc;border-style:solid;border-width:1px 2px 2px 1px;border-color:#0028c0 #000030 #000030 #0018b0;box-sizing:border-box;"></div>
<div class="a" style="left:48px;top:418px;width:54px;height:27px;background:#0033cc;border-style:solid;border-width:1px 2px 2px 1px;border-color:#0028c0 #000030 #000030 #0018b0;box-sizing:border-box;"></div>
<div class="a" style="left:102px;top:418px;width:40px;height:27px;background:#0033cc;border-style:solid;border-width:1px 2px 2px 1px;border-color:#0028c0 #000030 #000030 #0018b0;box-sizing:border-box;"></div>
<div class="a" style="left:142px;top:418px;width:41px;height:27px;background:#0033cc;border-style:solid;border-width:1px 2px 2px 1px;border-color:#0028c0 #000030 #000030 #0018b0;box-sizing:border-box;"></div>
<svg class="a" style="left:-2px;top:-142px;overflow:visible" width="1" height="1"><path d="M26.8 569.1999999999999L37.6 574.4L26.8 579.6" stroke="#fff" stroke-width="3.2" fill="none" stroke-linejoin="miter" stroke-miterlimit="2"/></svg>
<svg class="a" style="left:-2px;top:-142px;overflow:visible" width="1" height="1"><path d="M66.8 569.1999999999999L77.4 574.4L66.8 579.6" stroke="#fff" stroke-width="3.2" fill="none" stroke-linejoin="miter" stroke-miterlimit="2"/></svg>
<div class="a" style="left:83px;top:423px;width:3px;height:20px;background:#fff;"></div>
<svg class="a" style="left:-2px;top:-142px;overflow:visible" width="1" height="1"><path d="M119 574.4H132M125.5 567.8V581" stroke="#fff" stroke-width="3.3" fill="none" stroke-linejoin="miter" stroke-miterlimit="2"/></svg>
<svg class="a" style="left:-2px;top:-142px;overflow:visible" width="1" height="1"><path d="M160.8 569.5L170.2 579.1M170.2 569.5L160.8 579.1" stroke="#fff" stroke-width="3" fill="none" stroke-linejoin="miter" stroke-miterlimit="2"/></svg>
<div class="a" style="left:10px;top:480px;width:471px;height:62px;background:#d6e6fe;"></div>
<div class="a" style="left:10px;top:480px;width:38px;height:27px;background:#0033cc;border-style:solid;border-width:1px 2px 2px 1px;border-color:#0028c0 #000030 #000030 #0018b0;box-sizing:border-box;"></div>
<div class="a" style="left:48px;top:480px;width:54px;height:27px;background:#0033cc;border-style:solid;border-width:1px 2px 2px 1px;border-color:#0028c0 #000030 #000030 #0018b0;box-sizing:border-box;"></div>
<div class="a" style="left:102px;top:480px;width:40px;height:27px;background:#0033cc;border-style:solid;border-width:1px 2px 2px 1px;border-color:#0028c0 #000030 #000030 #0018b0;box-sizing:border-box;"></div>
<div class="a" style="left:142px;top:480px;width:41px;height:27px;background:#0033cc;border-style:solid;border-width:1px 2px 2px 1px;border-color:#0028c0 #000030 #000030 #0018b0;box-sizing:border-box;"></div>
<svg class="a" style="left:-2px;top:-142px;overflow:visible" width="1" height="1"><path d="M26.8 631.1999999999999L37.6 636.4L26.8 641.6" stroke="#fff" stroke-width="3.2" fill="none" stroke-linejoin="miter" stroke-miterlimit="2"/></svg>
<svg class="a" style="left:-2px;top:-142px;overflow:visible" width="1" height="1"><path d="M66.8 631.1999999999999L77.4 636.4L66.8 641.6" stroke="#fff" stroke-width="3.2" fill="none" stroke-linejoin="miter" stroke-miterlimit="2"/></svg>
<div class="a" style="left:83px;top:485px;width:3px;height:20px;background:#fff;"></div>
<svg class="a" style="left:-2px;top:-142px;overflow:visible" width="1" height="1"><path d="M119 636.4H132M125.5 629.8V643" stroke="#fff" stroke-width="3.3" fill="none" stroke-linejoin="miter" stroke-miterlimit="2"/></svg>
<svg class="a" style="left:-2px;top:-142px;overflow:visible" width="1" height="1"><path d="M160.8 631.5L170.2 641.1M170.2 631.5L160.8 641.1" stroke="#fff" stroke-width="3" fill="none" stroke-linejoin="miter" stroke-miterlimit="2"/></svg>
<div class="a" style="left:10px;top:542px;width:471px;height:62px;background:#fff;"></div>
<div class="a" style="left:10px;top:542px;width:38px;height:27px;background:#0033cc;border-style:solid;border-width:1px 2px 2px 1px;border-color:#0028c0 #000030 #000030 #0018b0;box-sizing:border-box;"></div>
<div class="a" style="left:48px;top:542px;width:54px;height:27px;background:#0033cc;border-style:solid;border-width:1px 2px 2px 1px;border-color:#0028c0 #000030 #000030 #0018b0;box-sizing:border-box;"></div>
<div class="a" style="left:102px;top:542px;width:40px;height:27px;background:#0033cc;border-style:solid;border-width:1px 2px 2px 1px;border-color:#0028c0 #000030 #000030 #0018b0;box-sizing:border-box;"></div>
<div class="a" style="left:142px;top:542px;width:41px;height:27px;background:#0033cc;border-style:solid;border-width:1px 2px 2px 1px;border-color:#0028c0 #000030 #000030 #0018b0;box-sizing:border-box;"></div>
<svg class="a" style="left:-2px;top:-142px;overflow:visible" width="1" height="1"><path d="M26.8 693.1999999999999L37.6 698.4L26.8 703.6" stroke="#fff" stroke-width="3.2" fill="none" stroke-linejoin="miter" stroke-miterlimit="2"/></svg>
<svg class="a" style="left:-2px;top:-142px;overflow:visible" width="1" height="1"><path d="M66.8 693.1999999999999L77.4 698.4L66.8 703.6" stroke="#fff" stroke-width="3.2" fill="none" stroke-linejoin="miter" stroke-miterlimit="2"/></svg>
<div class="a" style="left:83px;top:547px;width:3px;height:20px;background:#fff;"></div>
<svg class="a" style="left:-2px;top:-142px;overflow:visible" width="1" height="1"><path d="M119 698.4H132M125.5 691.8V705" stroke="#fff" stroke-width="3.3" fill="none" stroke-linejoin="miter" stroke-miterlimit="2"/></svg>
<svg class="a" style="left:-2px;top:-142px;overflow:visible" width="1" height="1"><path d="M160.8 693.5L170.2 703.1M170.2 693.5L160.8 703.1" stroke="#fff" stroke-width="3" fill="none" stroke-linejoin="miter" stroke-miterlimit="2"/></svg>
<div class="t" id="t26" style="left:214.40px;top:268px;font-size:20px;line-height:20px;letter-spacing:-0.550px;">All Songs</div>
<div class="t" id="t27" style="left:213.80px;top:300px;font-size:20px;line-height:20px;color:#466797;letter-spacing:-0.267px;">4400Hz_16Bits_48KSampling</div>
<div class="t" id="t28" style="left:211.60px;top:330px;font-size:20px;line-height:20px;letter-spacing:-0.500px;">from by</div>
<div class="t" id="t29" style="left:284.00px;top:330px;font-size:20px;line-height:20px;color:#466797;letter-spacing:-0.167px;">Wallace</div>
<div class="t" id="t30" style="left:214.00px;top:362px;font-size:20px;line-height:20px;color:#466797;letter-spacing:0.044px;">16 48000 1 440 10</div>
<div class="t" id="t31" style="left:387.70px;top:362px;font-size:20px;line-height:20px;letter-spacing:-0.067px;">from by</div>
<div class="t" id="t32" style="left:459.80px;top:362px;font-size:20px;line-height:20px;color:#466797;">No Artist</div>
<div class="t" id="t33" style="left:209.90px;top:392px;font-size:20px;line-height:20px;color:#466797;letter-spacing:0.200px;">Artist</div>
<div class="t" id="t34" style="left:213.60px;top:424px;font-size:20px;line-height:20px;color:#466797;letter-spacing:-0.262px;">4400Hz16Bits48K00</div>
<div class="t" id="t35" style="left:398.50px;top:424px;font-size:20px;line-height:20px;letter-spacing:-0.217px;">from by</div>
<div class="t" id="t36" style="left:469.40px;top:424px;font-size:20px;line-height:20px;color:#466797;">No Artist</div>
<div class="t" id="t37" style="left:209.90px;top:454px;font-size:20px;line-height:20px;color:#466797;letter-spacing:0.200px;">Artist</div>
<div class="t" id="t38" style="left:214.00px;top:486px;font-size:20px;line-height:20px;color:#466797;">flac 16 08000 1 440 10</div>
<div class="t" id="t39" style="left:424.50px;top:486px;font-size:20px;line-height:20px;">from by</div>
<div class="t" id="t40" style="left:208.90px;top:516px;font-size:20px;line-height:20px;color:#466797;letter-spacing:0.250px;">No Artist</div>
<div class="t" id="t41" style="left:214.00px;top:548px;font-size:20px;line-height:20px;color:#466797;">flac 16 08000 2 440 10</div>
<div class="t" id="t42" style="left:424.50px;top:548px;font-size:20px;line-height:20px;">from by</div>
</div>
<div class="a" style="left:515px;top:142px;width:481px;height:570px;overflow:hidden;">
<div class="a" style="left:10px;top:15px;width:200px;height:2px;background:#0033cc;"></div>
<div class="t" id="t43" style="left:9.00px;top:23px;font-size:20px;line-height:20px;letter-spacing:0.065px;">Now stopped on 1 of 299:</div>
<div class="t" id="t44" style="left:254.00px;top:23px;font-size:20px;line-height:20px;color:#466797;letter-spacing:0.031px;">16 48000 1 440 10</div>
<div class="t" id="t45" style="left:425.90px;top:23px;font-size:20px;line-height:20px;letter-spacing:-0.500px;">by</div>
<div class="t" id="t46" style="left:453.80px;top:23px;font-size:20px;line-height:20px;color:#466797;">No</div>
<div class="t" id="t47" style="left:10.00px;top:51px;font-size:20px;line-height:20px;color:#466797;letter-spacing:0.200px;">Artist</div>
<div class="a" style="left:63px;top:46px;width:40px;height:28px;background:#0033cc;border-style:solid;border-width:1px 2px 2px 1px;border-color:#0028c0 #000030 #000030 #0018b0;box-sizing:border-box;"></div>
<svg class="a" style="left:-515px;top:-142px;overflow:visible" width="1" height="1"><path d="M594 199L603.25 207.75M603.25 199L594 207.75" stroke="#fff" stroke-width="2.8" fill="none" stroke-linejoin="miter" stroke-miterlimit="2"/></svg>
<div class="a" style="left:10px;top:79px;width:24px;height:24px;background:#0033cc;border-style:solid;border-width:1px 2px 2px 1px;border-color:#0028c0 #000030 #000030 #0018b0;box-sizing:border-box;"></div>
<svg class="a" style="left:15.700000000000045px;top:79px" width="16" height="24" viewBox="0 0 16 24"><path d="M6 6v12L0 12zM12 6v12L6 12z" fill="#fff"/></svg>
<div class="a" style="left:34px;top:79px;width:24px;height:24px;background:#0033cc;border-style:solid;border-width:1px 2px 2px 1px;border-color:#0028c0 #000030 #000030 #0018b0;box-sizing:border-box;"></div>
<svg class="a" style="left:38.700000000000045px;top:79px" width="16" height="24" viewBox="0 0 16 24"><rect x="0" y="6" width="1.8" height="12" fill="#fff"/><path d="M13 6v12L3 12z" fill="#fff"/></svg>
<div class="a" style="left:58px;top:79px;width:24px;height:24px;background:#0033cc;border-style:solid;border-width:1px 2px 2px 1px;border-color:#0028c0 #000030 #000030 #0018b0;box-sizing:border-box;"></div>
<svg class="a" style="left:63.60000000000002px;top:79px" width="16" height="24" viewBox="0 0 16 24"><path d="M0 6v12l11-6z" fill="#fff"/></svg>
<div class="a" style="left:82px;top:79px;width:24px;height:24px;background:#0033cc;border-style:solid;border-width:1px 2px 2px 1px;border-color:#0028c0 #000030 #000030 #0018b0;box-sizing:border-box;"></div>
<svg class="a" style="left:88.5px;top:79px" width="16" height="24" viewBox="0 0 16 24"><rect x="0" y="6" width="4" height="12" fill="#fff"/><rect x="7" y="6" width="4" height="12" fill="#fff"/></svg>
<div class="a" style="left:106px;top:79px;width:24px;height:24px;background:#0033cc;border-style:solid;border-width:1px 2px 2px 2px;border-color:#0a3a0a #33ff33 #33ff33 #0a3a0a;box-sizing:border-box;"></div>
<svg class="a" style="left:111.79999999999995px;top:79px" width="16" height="24" viewBox="0 0 16 24"><rect x="0" y="5.5" width="12.5" height="12.5" fill="#33ff33"/></svg>
<div class="a" style="left:130px;top:79px;width:24px;height:24px;background:#0033cc;border-style:solid;border-width:1px 2px 2px 1px;border-color:#0028c0 #000030 #000030 #0018b0;box-sizing:border-box;"></div>
<svg class="a" style="left:135.5px;top:79px" width="16" height="24" viewBox="0 0 16 24"><path d="M0 6v12l10-6z" fill="#fff"/><rect x="12" y="6" width="1.8" height="12" fill="#fff"/></svg>
<div class="a" style="left:154px;top:79px;width:24px;height:24px;background:#0033cc;border-style:solid;border-width:1px 2px 2px 1px;border-color:#0028c0 #000030 #000030 #0018b0;box-sizing:border-box;"></div>
<svg class="a" style="left:159.5px;top:79px" width="16" height="24" viewBox="0 0 16 24"><path d="M0 6v12l6-6zM6 6v12l6-6z" fill="#fff"/></svg>
<div class="a" style="left:176px;top:80px;width:2px;height:21px;background:#0033cc;"></div>
<div class="t" id="t48" style="left:177.70px;top:85px;font-size:20px;line-height:20px;">Repeat:</div>
<div class="a" style="left:258px;top:79px;width:24px;height:24px;background:#0033cc;border-style:solid;border-width:1px 2px 2px 1px;border-color:#0028c0 #000030 #000030 #0018b0;box-sizing:border-box;"></div>
<svg class="a" style="left:258px;top:79px" width="24" height="24" viewBox="0 0 24 24"><path d="M18 9.8V4.1H6.1V19.9H18V14.1" fill="none" stroke="#fff" stroke-width="2"/><rect x="16" y="11" width="4" height="2" fill="#fff"/></svg>
<div class="a" style="left:282px;top:79px;width:24px;height:24px;background:#0033cc;border-style:solid;border-width:1px 2px 2px 2px;border-color:#0a3a0a #33ff33 #33ff33 #0a3a0a;box-sizing:border-box;"></div>
<svg class="a" style="left:282px;top:79px" width="24" height="24" viewBox="0 0 24 24"><path d="M18 6.7V4H5.9V20H18V17" fill="none" stroke="#33ff33" stroke-width="2"/><rect x="15.9" y="8.1" width="4.1" height="1.8" fill="#33ff33"/><rect x="15.9" y="11.2" width="4.1" height="1.8" fill="#33ff33"/><rect x="15.9" y="14.2" width="4.1" height="1.8" fill="#33ff33"/></svg>
<div class="a" style="left:306px;top:79px;width:24px;height:24px;background:#0033cc;border-style:solid;border-width:1px 2px 2px 1px;border-color:#0028c0 #000030 #000030 #0018b0;box-sizing:border-box;"></div>
<svg class="a" style="left:306px;top:79px" width="24" height="24" viewBox="0 0 24 24"><rect x="10" y="4.9" width="4" height="1.8" fill="#fff"/><rect x="10" y="8.1" width="4" height="1.8" fill="#fff"/><rect x="10" y="11.2" width="4" height="1.8" fill="#fff"/><rect x="10" y="14.3" width="4" height="1.8" fill="#fff"/><rect x="10" y="17.2" width="4" height="1.8" fill="#fff"/></svg>
<div class="t" id="t49" style="left:329.50px;top:85px;font-size:20px;line-height:20px;letter-spacing:0.143px;">Shuffle:</div>
<div class="a" style="left:408px;top:79px;width:53px;height:26px;background:#0033cc;border-style:solid;border-width:1px 2px 2px 2px;border-color:#0a3a0a #33ff33 #33ff33 #0a3a0a;box-sizing:border-box;"></div>
<div class="t" id="t50" style="left:408.00px;top:83px;font-size:20px;line-height:20px;font-weight:700;color:#33ff33;width:53px;text-align:center;transform:scaleX(1.1040);transform-origin:50% 50%;">off</div>
<div class="a" style="left:10px;top:109px;width:81px;height:27px;background:#0033cc;border-style:solid;border-width:1px 2px 2px 1px;border-color:#0028c0 #000030 #000030 #0018b0;box-sizing:border-box;"></div>
<div class="t" id="t51" style="left:10.00px;top:113px;font-size:20px;line-height:20px;font-weight:700;color:#fff;letter-spacing:0.125px;width:81px;text-align:center;">songs</div>
<div class="a" style="left:91px;top:109px;width:98px;height:27px;background:#0033cc;border-style:solid;border-width:1px 2px 2px 1px;border-color:#0028c0 #000030 #000030 #0018b0;box-sizing:border-box;"></div>
<div class="t" id="t52" style="left:91.00px;top:113px;font-size:20px;line-height:20px;font-weight:700;color:#fff;letter-spacing:0.440px;width:98px;text-align:center;">albums</div>
<div class="t" id="t53" style="left:10.00px;top:147px;font-size:20px;line-height:20px;letter-spacing:0.167px;">Volume:</div>
<div class="a" style="left:95px;top:142px;width:84px;height:26px;background:#0033cc;border-style:solid;border-width:1px 2px 2px 1px;border-color:#0028c0 #000030 #000030 #0018b0;box-sizing:border-box;"></div>
<div class="t" id="t54" style="left:95.00px;top:145px;font-size:20px;line-height:20px;font-weight:700;color:#fff;width:84px;text-align:center;transform:scaleX(1.0690);transform-origin:50% 50%;">Softer</div>
<div class="a" style="left:179px;top:142px;width:37px;height:26px;background:#0033cc;border-style:solid;border-width:1px 2px 2px 1px;border-color:#0028c0 #000030 #000030 #0018b0;box-sizing:border-box;"></div>
<div class="t" id="t55" style="left:179.00px;top:145px;font-size:20px;line-height:20px;font-weight:700;color:#fff;width:37px;text-align:center;">1</div>
<div class="a" style="left:216px;top:142px;width:38px;height:26px;background:#0033cc;border-style:solid;border-width:1px 2px 2px 1px;border-color:#0028c0 #000030 #000030 #0018b0;box-sizing:border-box;"></div>
<div class="t" id="t56" style="left:216.00px;top:145px;font-size:20px;line-height:20px;font-weight:700;color:#fff;width:38px;text-align:center;">2</div>
<div class="a" style="left:254px;top:142px;width:37px;height:26px;background:#0033cc;border-style:solid;border-width:1px 2px 2px 1px;border-color:#0028c0 #000030 #000030 #0018b0;box-sizing:border-box;"></div>
<div class="t" id="t57" style="left:254.00px;top:145px;font-size:20px;line-height:20px;font-weight:700;color:#fff;width:37px;text-align:center;">3</div>
<div class="a" style="left:291px;top:142px;width:36px;height:26px;background:#0033cc;border-style:solid;border-width:1px 2px 2px 1px;border-color:#0028c0 #000030 #000030 #0018b0;box-sizing:border-box;"></div>
<div class="t" id="t58" style="left:291.00px;top:145px;font-size:20px;line-height:20px;font-weight:700;color:#fff;width:36px;text-align:center;">4</div>
<div class="a" style="left:327px;top:142px;width:38px;height:26px;background:#0033cc;border-style:solid;border-width:1px 2px 2px 1px;border-color:#0028c0 #000030 #000030 #0018b0;box-sizing:border-box;"></div>
<div class="t" id="t59" style="left:327.00px;top:145px;font-size:20px;line-height:20px;font-weight:700;color:#fff;width:38px;text-align:center;">5</div>
<div class="a" style="left:365px;top:142px;width:37px;height:26px;background:#0033cc;border-style:solid;border-width:1px 2px 2px 2px;border-color:#0a3a0a #33ff33 #33ff33 #0a3a0a;box-sizing:border-box;"></div>
<div class="t" id="t60" style="left:365.00px;top:145px;font-size:20px;line-height:20px;font-weight:700;color:#33ff33;width:37px;text-align:center;">6</div>
<div class="a" style="left:402px;top:142px;width:37px;height:26px;background:#0033cc;border-style:solid;border-width:1px 2px 2px 1px;border-color:#0028c0 #000030 #000030 #0018b0;box-sizing:border-box;"></div>
<div class="t" id="t61" style="left:402.00px;top:145px;font-size:20px;line-height:20px;font-weight:700;color:#fff;width:37px;text-align:center;">7</div>
<div class="a" style="left:439px;top:142px;width:36px;height:26px;background:#0033cc;border-style:solid;border-width:1px 2px 2px 1px;border-color:#0028c0 #000030 #000030 #0018b0;box-sizing:border-box;"></div>
<div class="t" id="t62" style="left:439.00px;top:145px;font-size:20px;line-height:20px;font-weight:700;color:#fff;width:36px;text-align:center;">8</div>
<div class="a" style="left:10px;top:171px;width:36px;height:27px;background:#0033cc;border-style:solid;border-width:1px 2px 2px 1px;border-color:#0028c0 #000030 #000030 #0018b0;box-sizing:border-box;"></div>
<div class="t" id="t63" style="left:10.00px;top:175px;font-size:20px;line-height:20px;font-weight:700;color:#fff;width:36px;text-align:center;">9</div>
<div class="a" style="left:46px;top:171px;width:50px;height:27px;background:#0033cc;border-style:solid;border-width:1px 2px 2px 1px;border-color:#0028c0 #000030 #000030 #0018b0;box-sizing:border-box;"></div>
<div class="t" id="t64" style="left:46.00px;top:175px;font-size:20px;line-height:20px;font-weight:700;color:#fff;width:50px;text-align:center;">10</div>
<div class="a" style="left:96px;top:171px;width:51px;height:27px;background:#0033cc;border-style:solid;border-width:1px 2px 2px 1px;border-color:#0028c0 #000030 #000030 #0018b0;box-sizing:border-box;"></div>
<div class="t" id="t65" style="left:96.00px;top:175px;font-size:20px;line-height:20px;font-weight:700;color:#fff;width:51px;text-align:center;">11</div>
<div class="a" style="left:147px;top:171px;width:94px;height:27px;background:#0033cc;border-style:solid;border-width:1px 2px 2px 1px;border-color:#0028c0 #000030 #000030 #0018b0;box-sizing:border-box;"></div>
<div class="t" id="t66" style="left:147.00px;top:175px;font-size:20px;line-height:20px;font-weight:700;color:#fff;letter-spacing:0.450px;width:94px;text-align:center;">Louder</div>
<div class="t" id="t67" style="left:10.00px;top:209px;font-size:20px;line-height:20px;letter-spacing:0.137px;">The current playlist</div>
<div class="a" style="left:192px;top:203px;width:73px;height:27px;background:#0033cc;border-style:solid;border-width:1px 2px 2px 1px;border-color:#0028c0 #000030 #000030 #0018b0;box-sizing:border-box;"></div>
<div class="t" id="t68" style="left:192.00px;top:207px;font-size:20px;line-height:20px;font-weight:700;color:#fff;width:73px;text-align:center;transform:scaleX(1.0565);transform-origin:50% 50%;">Save</div>
<div class="a" style="left:265px;top:203px;width:124px;height:27px;background:#0033cc;border-style:solid;border-width:1px 2px 2px 1px;border-color:#0028c0 #000030 #000030 #0018b0;box-sizing:border-box;"></div>
<div class="t" id="t69" style="left:265.00px;top:207px;font-size:20px;line-height:20px;font-weight:700;color:#fff;width:124px;text-align:center;transform:scaleX(1.0532);transform-origin:50% 50%;">Download</div>
<div class="a" style="left:389px;top:203px;width:77px;height:27px;background:#0033cc;border-style:solid;border-width:1px 2px 2px 1px;border-color:#0028c0 #000030 #000030 #0018b0;box-sizing:border-box;"></div>
<div class="t" id="t70" style="left:389.00px;top:207px;font-size:20px;line-height:20px;font-weight:700;color:#fff;width:77px;text-align:center;transform:scaleX(1.0694);transform-origin:50% 50%;">Clear</div>
<div class="t" id="t71" style="left:9.00px;top:240px;font-size:20px;line-height:20px;letter-spacing:-0.400px;">Pages:</div>
<div class="a" style="left:80px;top:235px;width:37px;height:27px;background:#0033cc;border-style:solid;border-width:1px 2px 2px 2px;border-color:#0a3a0a #33ff33 #33ff33 #0a3a0a;box-sizing:border-box;"></div>
<div class="t" id="t72" style="left:80.00px;top:239px;font-size:20px;line-height:20px;font-weight:700;color:#33ff33;width:37px;text-align:center;">1</div>
<div class="a" style="left:117px;top:235px;width:36px;height:27px;background:#0033cc;border-style:solid;border-width:1px 2px 2px 1px;border-color:#0028c0 #000030 #000030 #0018b0;box-sizing:border-box;"></div>
<div class="t" id="t73" style="left:117.00px;top:239px;font-size:20px;line-height:20px;font-weight:700;color:#fff;width:36px;text-align:center;">2</div>
<div class="a" style="left:153px;top:235px;width:38px;height:27px;background:#0033cc;border-style:solid;border-width:1px 2px 2px 1px;border-color:#0028c0 #000030 #000030 #0018b0;box-sizing:border-box;"></div>
<div class="t" id="t74" style="left:153.00px;top:239px;font-size:20px;line-height:20px;font-weight:700;color:#fff;width:38px;text-align:center;">3</div>
<div class="a" style="left:191px;top:235px;width:36px;height:27px;background:#0033cc;border-style:solid;border-width:1px 2px 2px 1px;border-color:#0028c0 #000030 #000030 #0018b0;box-sizing:border-box;"></div>
<div class="t" id="t75" style="left:191.00px;top:239px;font-size:20px;line-height:20px;font-weight:700;color:#fff;width:36px;text-align:center;">4</div>
<div class="a" style="left:227px;top:235px;width:37px;height:27px;background:#0033cc;border-style:solid;border-width:1px 2px 2px 1px;border-color:#0028c0 #000030 #000030 #0018b0;box-sizing:border-box;"></div>
<div class="t" id="t76" style="left:227.00px;top:239px;font-size:20px;line-height:20px;font-weight:700;color:#fff;width:37px;text-align:center;">5</div>
<div class="a" style="left:264px;top:235px;width:37px;height:27px;background:#0033cc;border-style:solid;border-width:1px 2px 2px 1px;border-color:#0028c0 #000030 #000030 #0018b0;box-sizing:border-box;"></div>
<div class="t" id="t77" style="left:264.00px;top:239px;font-size:20px;line-height:20px;font-weight:700;color:#fff;width:37px;text-align:center;">6</div>
<div class="a" style="left:301px;top:235px;width:41px;height:27px;background:#0033cc;border-style:solid;border-width:1px 2px 2px 1px;border-color:#0028c0 #000030 #000030 #0018b0;box-sizing:border-box;"></div>
<svg class="a" style="left:-515px;top:-142px;overflow:visible" width="1" height="1"><path d="M832.1 386.4L842.5 391.5L832.1 396.6" stroke="#fff" stroke-width="3.2" fill="none" stroke-linejoin="miter" stroke-miterlimit="2"/></svg>
<div class="t" id="t78" style="left:8.00px;top:273px;font-size:20px;line-height:20px;letter-spacing:0.347px;">Items 1 to 50 of 299</div>
<div class="a" style="left:10px;top:325px;width:471px;height:32px;background:#d6e6fe;"></div>
<div class="a" style="left:10px;top:325px;width:40px;height:27px;background:#0033cc;border-style:solid;border-width:1px 2px 2px 1px;border-color:#0028c0 #000030 #000030 #0018b0;box-sizing:border-box;"></div>
<svg class="a" style="left:-515px;top:-142px;overflow:visible" width="1" height="1"><path d="M540.0 476.59999999999997L550.4 481.6L540.0 486.6" stroke="#fff" stroke-width="3.2" fill="none" stroke-linejoin="miter" stroke-miterlimit="2"/></svg>
<div class="a" style="left:50px;top:325px;width:44px;height:27px;background:#0033cc;border-style:solid;border-width:1px 2px 2px 1px;border-color:#0028c0 #000030 #000030 #0018b0;box-sizing:border-box;"></div>
<svg class="a" style="left:60px;top:325.5px" width="24" height="27" viewBox="0 0 24 27"><path d="M12 4.5v16.5M8 8.5l4-4 4 4" stroke="#fff" stroke-width="2.3" fill="none"/></svg>
<div class="a" style="left:94px;top:325px;width:45px;height:27px;background:#0033cc;border-style:solid;border-width:1px 2px 2px 1px;border-color:#0028c0 #000030 #000030 #0018b0;box-sizing:border-box;"></div>
<svg class="a" style="left:105px;top:325px" width="24" height="27" viewBox="0 0 24 27"><path d="M12 3v16.5M8 17l4 4 4-4" stroke="#fff" stroke-width="2.3" fill="none"/></svg>
<div class="a" style="left:139px;top:325px;width:41px;height:27px;background:#0033cc;border-style:solid;border-width:1px 2px 2px 1px;border-color:#0028c0 #000030 #000030 #0018b0;box-sizing:border-box;"></div>
<svg class="a" style="left:-515px;top:-142px;overflow:visible" width="1" height="1"><path d="M670.8 477.4L680 486.2M680 477.4L670.8 486.2" stroke="#fff" stroke-width="2.8" fill="none" stroke-linejoin="miter" stroke-miterlimit="2"/></svg>
<div class="a" style="left:10px;top:357px;width:471px;height:62px;background:#fff;"></div>
<div class="a" style="left:10px;top:357px;width:40px;height:27px;background:#0033cc;border-style:solid;border-width:1px 2px 2px 1px;border-color:#0028c0 #000030 #000030 #0018b0;box-sizing:border-box;"></div>
<svg class="a" style="left:-515px;top:-142px;overflow:visible" width="1" height="1"><path d="M540.0 508.59999999999997L550.4 513.6L540.0 518.6" stroke="#fff" stroke-width="3.2" fill="none" stroke-linejoin="miter" stroke-miterlimit="2"/></svg>
<div class="a" style="left:50px;top:357px;width:44px;height:27px;background:#0033cc;border-style:solid;border-width:1px 2px 2px 1px;border-color:#0028c0 #000030 #000030 #0018b0;box-sizing:border-box;"></div>
<svg class="a" style="left:60px;top:357.5px" width="24" height="27" viewBox="0 0 24 27"><path d="M12 4.5v16.5M8 8.5l4-4 4 4" stroke="#fff" stroke-width="2.3" fill="none"/></svg>
<div class="a" style="left:94px;top:357px;width:45px;height:27px;background:#0033cc;border-style:solid;border-width:1px 2px 2px 1px;border-color:#0028c0 #000030 #000030 #0018b0;box-sizing:border-box;"></div>
<svg class="a" style="left:105px;top:357px" width="24" height="27" viewBox="0 0 24 27"><path d="M12 3v16.5M8 17l4 4 4-4" stroke="#fff" stroke-width="2.3" fill="none"/></svg>
<div class="a" style="left:139px;top:357px;width:41px;height:27px;background:#0033cc;border-style:solid;border-width:1px 2px 2px 1px;border-color:#0028c0 #000030 #000030 #0018b0;box-sizing:border-box;"></div>
<svg class="a" style="left:-515px;top:-142px;overflow:visible" width="1" height="1"><path d="M670.8 509.4L680 518.2M680 509.4L670.8 518.2" stroke="#fff" stroke-width="2.8" fill="none" stroke-linejoin="miter" stroke-miterlimit="2"/></svg>
<div class="a" style="left:10px;top:419px;width:471px;height:32px;background:#d6e6fe;"></div>
<div class="a" style="left:10px;top:419px;width:40px;height:27px;background:#0033cc;border-style:solid;border-width:1px 2px 2px 1px;border-color:#0028c0 #000030 #000030 #0018b0;box-sizing:border-box;"></div>
<svg class="a" style="left:-515px;top:-142px;overflow:visible" width="1" height="1"><path d="M540.0 570.6L550.4 575.6L540.0 580.6" stroke="#fff" stroke-width="3.2" fill="none" stroke-linejoin="miter" stroke-miterlimit="2"/></svg>
<div class="a" style="left:50px;top:419px;width:44px;height:27px;background:#0033cc;border-style:solid;border-width:1px 2px 2px 1px;border-color:#0028c0 #000030 #000030 #0018b0;box-sizing:border-box;"></div>
<svg class="a" style="left:60px;top:419.5px" width="24" height="27" viewBox="0 0 24 27"><path d="M12 4.5v16.5M8 8.5l4-4 4 4" stroke="#fff" stroke-width="2.3" fill="none"/></svg>
<div class="a" style="left:94px;top:419px;width:45px;height:27px;background:#0033cc;border-style:solid;border-width:1px 2px 2px 1px;border-color:#0028c0 #000030 #000030 #0018b0;box-sizing:border-box;"></div>
<svg class="a" style="left:105px;top:419px" width="24" height="27" viewBox="0 0 24 27"><path d="M12 3v16.5M8 17l4 4 4-4" stroke="#fff" stroke-width="2.3" fill="none"/></svg>
<div class="a" style="left:139px;top:419px;width:41px;height:27px;background:#0033cc;border-style:solid;border-width:1px 2px 2px 1px;border-color:#0028c0 #000030 #000030 #0018b0;box-sizing:border-box;"></div>
<svg class="a" style="left:-515px;top:-142px;overflow:visible" width="1" height="1"><path d="M670.8 571.4L680 580.2M680 571.4L670.8 580.2" stroke="#fff" stroke-width="2.8" fill="none" stroke-linejoin="miter" stroke-miterlimit="2"/></svg>
<div class="a" style="left:10px;top:451px;width:471px;height:32px;background:#fff;"></div>
<div class="a" style="left:10px;top:451px;width:40px;height:27px;background:#0033cc;border-style:solid;border-width:1px 2px 2px 1px;border-color:#0028c0 #000030 #000030 #0018b0;box-sizing:border-box;"></div>
<svg class="a" style="left:-515px;top:-142px;overflow:visible" width="1" height="1"><path d="M540.0 602.6L550.4 607.6L540.0 612.6" stroke="#fff" stroke-width="3.2" fill="none" stroke-linejoin="miter" stroke-miterlimit="2"/></svg>
<div class="a" style="left:50px;top:451px;width:44px;height:27px;background:#0033cc;border-style:solid;border-width:1px 2px 2px 1px;border-color:#0028c0 #000030 #000030 #0018b0;box-sizing:border-box;"></div>
<svg class="a" style="left:60px;top:451.5px" width="24" height="27" viewBox="0 0 24 27"><path d="M12 4.5v16.5M8 8.5l4-4 4 4" stroke="#fff" stroke-width="2.3" fill="none"/></svg>
<div class="a" style="left:94px;top:451px;width:45px;height:27px;background:#0033cc;border-style:solid;border-width:1px 2px 2px 1px;border-color:#0028c0 #000030 #000030 #0018b0;box-sizing:border-box;"></div>
<svg class="a" style="left:105px;top:451px" width="24" height="27" viewBox="0 0 24 27"><path d="M12 3v16.5M8 17l4 4 4-4" stroke="#fff" stroke-width="2.3" fill="none"/></svg>
<div class="a" style="left:139px;top:451px;width:41px;height:27px;background:#0033cc;border-style:solid;border-width:1px 2px 2px 1px;border-color:#0028c0 #000030 #000030 #0018b0;box-sizing:border-box;"></div>
<svg class="a" style="left:-515px;top:-142px;overflow:visible" width="1" height="1"><path d="M670.8 603.4L680 612.2M680 603.4L670.8 612.2" stroke="#fff" stroke-width="2.8" fill="none" stroke-linejoin="miter" stroke-miterlimit="2"/></svg>
<div class="a" style="left:10px;top:483px;width:471px;height:62px;background:#d6e6fe;"></div>
<div class="a" style="left:10px;top:483px;width:40px;height:27px;background:#0033cc;border-style:solid;border-width:1px 2px 2px 1px;border-color:#0028c0 #000030 #000030 #0018b0;box-sizing:border-box;"></div>
<svg class="a" style="left:-515px;top:-142px;overflow:visible" width="1" height="1"><path d="M540.0 634.6L550.4 639.6L540.0 644.6" stroke="#fff" stroke-width="3.2" fill="none" stroke-linejoin="miter" stroke-miterlimit="2"/></svg>
<div class="a" style="left:50px;top:483px;width:44px;height:27px;background:#0033cc;border-style:solid;border-width:1px 2px 2px 1px;border-color:#0028c0 #000030 #000030 #0018b0;box-sizing:border-box;"></div>
<svg class="a" style="left:60px;top:483.5px" width="24" height="27" viewBox="0 0 24 27"><path d="M12 4.5v16.5M8 8.5l4-4 4 4" stroke="#fff" stroke-width="2.3" fill="none"/></svg>
<div class="a" style="left:94px;top:483px;width:45px;height:27px;background:#0033cc;border-style:solid;border-width:1px 2px 2px 1px;border-color:#0028c0 #000030 #000030 #0018b0;box-sizing:border-box;"></div>
<svg class="a" style="left:105px;top:483px" width="24" height="27" viewBox="0 0 24 27"><path d="M12 3v16.5M8 17l4 4 4-4" stroke="#fff" stroke-width="2.3" fill="none"/></svg>
<div class="a" style="left:139px;top:483px;width:41px;height:27px;background:#0033cc;border-style:solid;border-width:1px 2px 2px 1px;border-color:#0028c0 #000030 #000030 #0018b0;box-sizing:border-box;"></div>
<svg class="a" style="left:-515px;top:-142px;overflow:visible" width="1" height="1"><path d="M670.8 635.4L680 644.2M680 635.4L670.8 644.2" stroke="#fff" stroke-width="2.8" fill="none" stroke-linejoin="miter" stroke-miterlimit="2"/></svg>
<div class="a" style="left:10px;top:545px;width:471px;height:62px;background:#fff;"></div>
<div class="a" style="left:10px;top:545px;width:40px;height:27px;background:#0033cc;border-style:solid;border-width:1px 2px 2px 1px;border-color:#0028c0 #000030 #000030 #0018b0;box-sizing:border-box;"></div>
<svg class="a" style="left:-515px;top:-142px;overflow:visible" width="1" height="1"><path d="M540.0 696.6L550.4 701.6L540.0 706.6" stroke="#fff" stroke-width="3.2" fill="none" stroke-linejoin="miter" stroke-miterlimit="2"/></svg>
<div class="a" style="left:50px;top:545px;width:44px;height:27px;background:#0033cc;border-style:solid;border-width:1px 2px 2px 1px;border-color:#0028c0 #000030 #000030 #0018b0;box-sizing:border-box;"></div>
<svg class="a" style="left:60px;top:545.5px" width="24" height="27" viewBox="0 0 24 27"><path d="M12 4.5v16.5M8 8.5l4-4 4 4" stroke="#fff" stroke-width="2.3" fill="none"/></svg>
<div class="a" style="left:94px;top:545px;width:45px;height:27px;background:#0033cc;border-style:solid;border-width:1px 2px 2px 1px;border-color:#0028c0 #000030 #000030 #0018b0;box-sizing:border-box;"></div>
<svg class="a" style="left:105px;top:545px" width="24" height="27" viewBox="0 0 24 27"><path d="M12 3v16.5M8 17l4 4 4-4" stroke="#fff" stroke-width="2.3" fill="none"/></svg>
<div class="a" style="left:139px;top:545px;width:41px;height:27px;background:#0033cc;border-style:solid;border-width:1px 2px 2px 1px;border-color:#0028c0 #000030 #000030 #0018b0;box-sizing:border-box;"></div>
<svg class="a" style="left:-515px;top:-142px;overflow:visible" width="1" height="1"><path d="M670.8 697.4L680 706.2M680 697.4L670.8 706.2" stroke="#fff" stroke-width="2.8" fill="none" stroke-linejoin="miter" stroke-miterlimit="2"/></svg>
<div class="t" id="t79" style="left:183.84px;top:331px;font-size:20px;line-height:20px;font-weight:700;color:#466797;transform:scaleX(1.1576);transform-origin:0 50%;">16 48000 1 440 10</div>
<div class="t" id="t80" style="left:381.80px;top:331px;font-size:20px;line-height:20px;letter-spacing:0.200px;">by</div>
<div class="t" id="t81" style="left:409.00px;top:331px;font-size:20px;line-height:20px;color:#466797;">No Artist</div>
<div class="t" id="t82" style="left:184.00px;top:363px;font-size:20px;line-height:20px;color:#466797;letter-spacing:-0.292px;">4400Hz_16Bits_48KSampling</div>
<div class="t" id="t83" style="left:447.95px;top:363px;font-size:20px;line-height:20px;transform:scaleX(1.0500);transform-origin:0 50%;">by</div>
<div class="t" id="t84" style="left:150.50px;top:393px;font-size:20px;line-height:20px;color:#466797;letter-spacing:-0.250px;">Wallace</div>
<div class="t" id="t85" style="left:184.00px;top:425px;font-size:20px;line-height:20px;color:#466797;letter-spacing:-0.275px;">4400Hz16Bits48K00</div>
<div class="t" id="t86" style="left:367.00px;top:425px;font-size:20px;line-height:20px;">by</div>
<div class="t" id="t87" style="left:394.00px;top:425px;font-size:20px;line-height:20px;color:#466797;letter-spacing:0.250px;">No Artist</div>
<div class="t" id="t88" style="left:185.40px;top:457px;font-size:20px;line-height:20px;color:#466797;letter-spacing:-0.067px;">flac 16 08000 1 440 10</div>
<div class="t" id="t89" style="left:392.80px;top:457px;font-size:20px;line-height:20px;letter-spacing:-0.400px;">by</div>
<div class="t" id="t90" style="left:185.40px;top:489px;font-size:20px;line-height:20px;color:#466797;letter-spacing:-0.067px;">flac 16 08000 1 440 10</div>
<div class="t" id="t91" style="left:392.80px;top:489px;font-size:20px;line-height:20px;letter-spacing:-0.400px;">by</div>
<div class="t" id="t92" style="left:420.00px;top:489px;font-size:20px;line-height:20px;color:#466797;letter-spacing:-0.700px;">No</div>
<div class="t" id="t93" style="left:150.50px;top:519px;font-size:20px;line-height:20px;color:#466797;letter-spacing:0.200px;">Artist</div>
<div class="t" id="t94" style="left:185.40px;top:551px;font-size:20px;line-height:20px;color:#466797;letter-spacing:-0.067px;">flac 16 08000 2 440 10</div>
<div class="t" id="t95" style="left:392.80px;top:551px;font-size:20px;line-height:20px;letter-spacing:-0.400px;">by</div>
</div>
<svg class="a" style="left:0;top:0" width="1024" height="768"><ellipse cx="962.5" cy="234" rx="59" ry="40" fill="none" stroke="#e00000" stroke-width="1.2"/></svg>
</body></html>
